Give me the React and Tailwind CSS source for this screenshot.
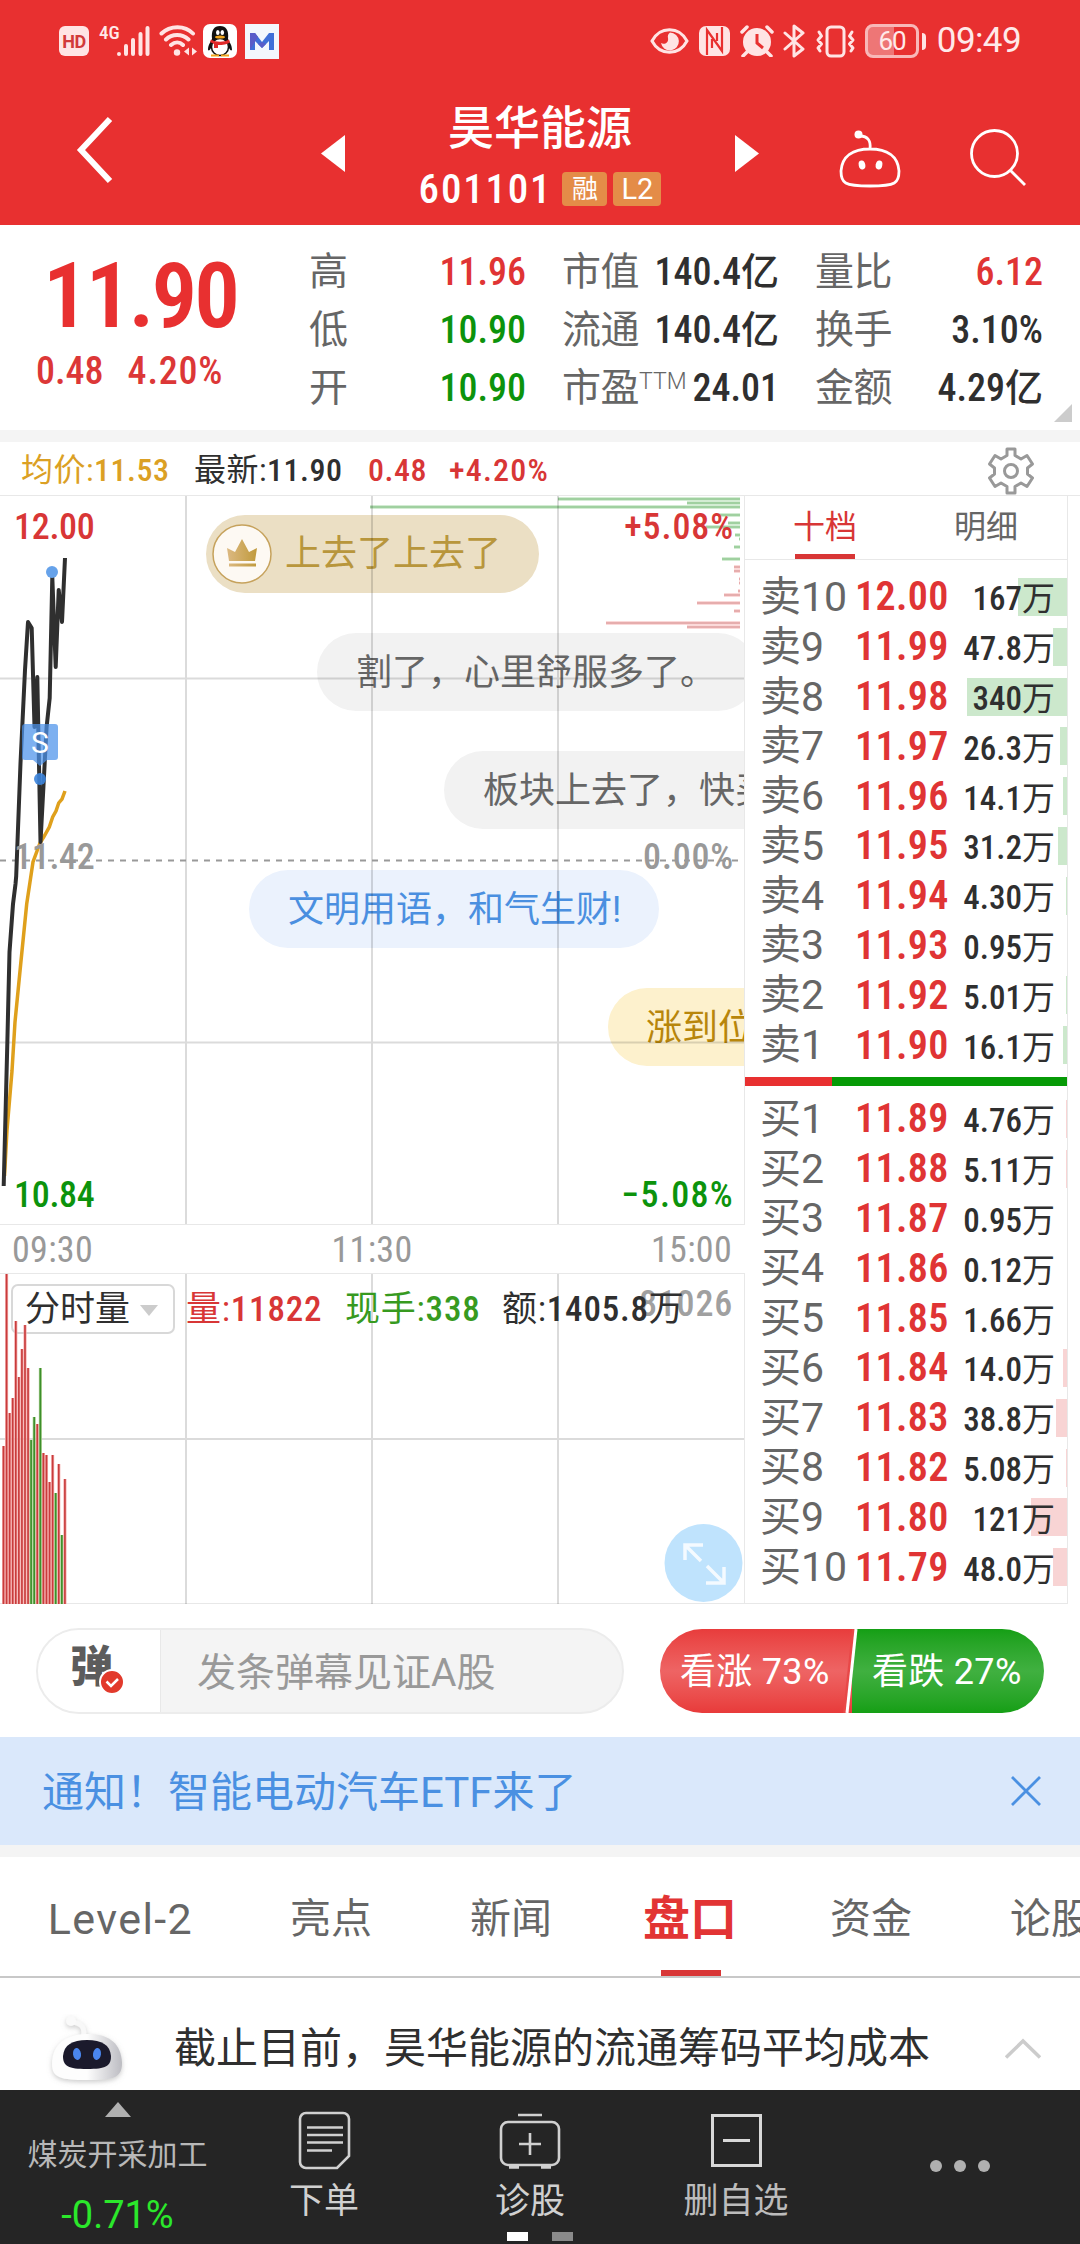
const quoteColumns = [
  {
    wrapper: 'ml-[309px] w-[217px]',
    rows: [
      { label: '高', value: '11.96', color: 'text-[#e03434]' },
      { label: '低', value: '10.90', color: 'text-[#0c930c]' },
      { label: '开', value: '10.90', color: 'text-[#0c930c]' },
    ],
  },
  {
    wrapper: 'ml-[36px] w-[217px]',
    rows: [
      { label: '市值', value: '140.4亿', color: 'text-[#2f2f2f]' },
      { label: '流通', value: '140.4亿', color: 'text-[#2f2f2f]' },
      { label: '市盈', sup: 'TTM', value: '24.01', color: 'text-[#2f2f2f]' },
    ],
  },
  {
    wrapper: 'ml-[36px] w-[228px]',
    rows: [
      { label: '量比', value: '6.12', color: 'text-[#e03434]' },
      { label: '换手', value: '3.10%', color: 'text-[#2f2f2f]' },
      { label: '金额', value: '4.29亿', color: 'text-[#2f2f2f]' },
    ],
  },
]

// bar = width of the depth bar in px
const sells = [
  { label: '卖10', price: '12.00', volume: '167万', bar: 49 },
  { label: '卖9', price: '11.99', volume: '47.8万', bar: 14 },
  { label: '卖8', price: '11.98', volume: '340万', bar: 100 },
  { label: '卖7', price: '11.97', volume: '26.3万', bar: 7 },
  { label: '卖6', price: '11.96', volume: '14.1万', bar: 4 },
  { label: '卖5', price: '11.95', volume: '31.2万', bar: 9 },
  { label: '卖4', price: '11.94', volume: '4.30万', bar: 1 },
  { label: '卖3', price: '11.93', volume: '0.95万', bar: 0 },
  { label: '卖2', price: '11.92', volume: '5.01万', bar: 1 },
  { label: '卖1', price: '11.90', volume: '16.1万', bar: 4 },
]

const buys = [
  { label: '买1', price: '11.89', volume: '4.76万', bar: 1 },
  { label: '买2', price: '11.88', volume: '5.11万', bar: 1 },
  { label: '买3', price: '11.87', volume: '0.95万', bar: 0 },
  { label: '买4', price: '11.86', volume: '0.12万', bar: 0 },
  { label: '买5', price: '11.85', volume: '1.66万', bar: 0 },
  { label: '买6', price: '11.84', volume: '14.0万', bar: 4 },
  { label: '买7', price: '11.83', volume: '38.8万', bar: 11 },
  { label: '买8', price: '11.82', volume: '5.08万', bar: 1 },
  { label: '买9', price: '11.80', volume: '121万', bar: 36 },
  { label: '买10', price: '11.79', volume: '48.0万', bar: 14 },
]

// [y, left x], all of them end at x = 740
const greenDepth = [[3, 558], [7, 687], [11, 370], [19, 718], [27, 728], [31, 706], [39, 735], [43, 739], [51, 734], [63, 722]]
const redDepth = [[71, 734], [75, 734], [83, 739], [87, 739], [95, 738], [99, 724], [107, 697], [115, 734], [127, 606], [131, 687]]

// [height, is green]
const volumes = [
  [158, 0], [330, 0], [191, 0], [206, 0], [283, 0], [227, 0], [255, 0], [279, 0], [236, 0],
  [164, 1], [187, 1], [180, 0], [236, 1], [151, 0], [149, 0], [122, 0], [149, 0], [111, 1],
  [140, 0], [69, 1], [125, 0],
]

const pricePoints = '3.7,690 7.3,548 9.5,456 13,408 15.5,388 16.2,380 20.5,267 25,174 28,126 31.7,132 34.5,231 37.3,181 40.5,346 46.6,231 49.7,202 52.3,81 55.7,171 58.7,94 62,126 65,62'
const averagePoints = '4.5,680 7,634 12,575 15,526 20.7,468 26.7,408 30,386 33,366 40,347 43.7,341 49.3,331 52.7,321 56,315 58.7,307 62,303 65,295'

function StatusBar() {
  return (
    <div className="flex h-[82px] items-center pr-[59px] pl-[59px] text-[#ffe9e9]">
      <div className="flex h-[30px] w-[30px] items-center justify-center rounded-[6px] bg-[#ffe4e4] text-[18px] font-bold tracking-[-0.5px] text-[#d23a3a]">HD</div>
      <div className="-mt-[18px] ml-[10px] w-[18px] font-['Roboto_Condensed',sans-serif] text-[19px] leading-[19px] font-medium">4G</div>
      <svg className="h-[32px] w-[33px]" viewBox="0 0 33 32" stroke="#ffe4e4" strokeWidth="4" strokeLinecap="round">
        <path d="M2 29v0M9 21v8M16 15v14M23.500 9v20M30.500 3v26" />
      </svg>
      <svg className="ml-[9px] h-[34px] w-[39px]" viewBox="0 0 39 34" fill="none" stroke="#ffe4e4" strokeWidth="4" strokeLinecap="round">
        <path d="M2.500 9.500C11 1 26 1 34 9.500M7 15.500C13 9.500 23 9.500 29.500 15.500M12 21C16 17.500 20.500 17.500 24 21" />
        <circle cx="18" cy="28.500" r="3.200" fill="#ffe4e4" stroke="none" />
        <path d="M30 23.500v8l-5-4zM33 23.500v8l5-4z" fill="#ffe4e4" stroke="none" />
      </svg>
      <svg className="ml-[5px] h-[34px] w-[34px]" viewBox="0 0 34 34">
        <rect width="34" height="34" rx="7" fill="#fff" />
        <path d="M5 26C5 20 8 18 9 15h16c1 3 4 5 4 11-1 1-2 0-3-2H8c-1 2-2 3-3 2z" fill="#111" />
        <ellipse cx="17" cy="23" rx="8.500" ry="8.500" fill="#fff" stroke="#111" strokeWidth="1.500" />
        <path d="M9 15C8 6 11 2 17 2s9 4 8 13z" fill="#111" />
        <ellipse cx="14.800" cy="8.500" rx="1.800" ry="2.500" fill="#fff" />
        <ellipse cx="19.300" cy="8.500" rx="1.800" ry="2.500" fill="#fff" />
        <ellipse cx="17" cy="13" rx="5" ry="1.600" fill="#f2a51c" />
        <path d="M8 15.500c5 3 13 3 18 0l1 3c-3 2-7 2.500-12 2.500v3h-4v-4l-4-2z" fill="#e02a2a" />
        <path d="M8 31.500h8M18 31.500h8" stroke="#f2a51c" strokeWidth="2" />
      </svg>
      <svg className="ml-[8px] h-[35px] w-[34px]" viewBox="0 0 34 35">
        <rect width="34" height="35" fill="#f3f7fd" />
        <path d="M5 9h5l7 9 7-9h5v17h-5v-9l-7 7-7-7v9H5z" fill="#3f6fd8" />
        <path d="M5 9h5l3 4-8 13zM17 18l4 2-4 4-4-4z" fill="#5a5cc8" />
      </svg>

      <svg className="ml-auto h-[28px] w-[39px]" viewBox="0 0 39 28" fill="none" stroke="#ffe4e4" strokeWidth="3">
        <path d="M2 14C10 -1 29 -1 37 14C29 29 10 29 2 14z" />
        <path d="M20 5.500a9 9 0 1 1-9 10.500c3 2 8 0 7-5c-.5-2 0-4 2-5.500z" fill="#ffe4e4" stroke="none" />
      </svg>
      <svg className="ml-[10px] h-[32px] w-[31px]" viewBox="0 0 31 32">
        <rect y="1" width="31" height="30" rx="7" fill="#ffe4e4" />
        <path d="M8 30V5l15 21V2M13 23v-9M18 8v8" fill="none" stroke="#e83030" strokeWidth="2.200" />
      </svg>
      <svg className="ml-[10px] h-[32px] w-[34px]" viewBox="0 0 34 32">
        <circle cx="17" cy="17" r="14" fill="#ffe4e4" />
        <path d="M2 7l5-5M32 7l-5-5M7 27l-4 4M27 27l4 4" stroke="#ffe4e4" strokeWidth="3.500" strokeLinecap="round" />
        <path d="M17 9v9l6 5" fill="none" stroke="#e83030" strokeWidth="3" />
      </svg>
      <svg className="ml-[9px] h-[34px] w-[23px]" viewBox="0 0 23 34" fill="none" stroke="#ffe4e4" strokeWidth="3" strokeLinejoin="round" strokeLinecap="round">
        <path d="M2 9l18 16-9 7V2l9 7L2 25" />
      </svg>
      <svg className="ml-[10px] h-[33px] w-[39px]" viewBox="0 0 39 33" fill="none" stroke="#ffe4e4" strokeWidth="3" strokeLinejoin="round" strokeLinecap="round">
        <rect x="11" y="2" width="17" height="29" rx="4" />
        <path d="M3 7l2.500 4-3.500 4 3.500 4-3.500 4 2 3M36 7l-2.500 4 3.500 4-3.500 4 3.500 4-2 3" />
      </svg>
      <div className="ml-[10px] flex h-[34px] w-[54px] items-center justify-center rounded-[8px] border-[3px] border-[#f8b8b8] bg-linear-to-r from-[#ee7676] from-55% to-[#e83030] to-55% text-[26px] leading-none tracking-[-1px]">60</div>
      <div className="ml-[3px] h-[17px] w-[4px] rounded-r bg-[#ffe4e4]" />
      <div className="ml-[9px] w-[86px] text-right font-['Roboto',sans-serif] text-[35px] leading-[34px] tracking-[-0.6px]">09:49</div>
    </div>
  )
}

function Header() {
  return (
    <div className="h-[225px] bg-[#e83030] text-white">
      <StatusBar />
      <div className="flex h-[143px]">
        <svg className="mt-[34px] ml-[74px] h-[68px] w-[40px]" viewBox="0 0 40 68" fill="none" stroke="#fff" strokeWidth="6">
          <path d="M36 3L7 34l29 31" />
        </svg>
        <svg className="mt-[53px] ml-[207px] h-[37px] w-[24px]" viewBox="0 0 24 37" fill="#fff"><path d="M24 0v37L0 18.500z" /></svg>
        <div className="ml-[65px] flex w-[260px] flex-col items-center">
          <div className="mt-[16px] text-[46px] leading-[60px] font-medium">昊华能源</div>
          <div className="mt-[10px] flex items-center">
            <span className="font-['Roboto_Condensed',sans-serif] text-[41px] leading-[42px] font-medium tracking-[1.8px]">601101</span>
            <span className="ml-[10px] h-[34px] w-[45px] rounded-[4px] bg-[#e48c48] text-center text-[26px] leading-[34px]">融</span>
            <span className="ml-[6px] h-[34px] w-[48px] rounded-[4px] bg-[#e48c48] text-center text-[29px] leading-[35px]">L2</span>
          </div>
        </div>
        <svg className="mt-[53px] ml-[65px] h-[37px] w-[24px]" viewBox="0 0 24 37" fill="#fff"><path d="M0 0v37l24-18.500z" /></svg>
        <svg className="mt-[46px] ml-[80px] h-[62px] w-[62px]" viewBox="0 0 62 62" fill="none" stroke="#fff" strokeWidth="2.800">
          <path d="M31 21c17 0 28 7 29 22c0 12-3 15-29 15S2 55 2 43C3 28 14 21 31 21zM31 21c1-8-2-13-10-13" />
          <circle cx="19.500" cy="6.500" r="4" fill="#fff" stroke="none" />
          <ellipse cx="23" cy="37" rx="3.300" ry="4.500" fill="#fff" stroke="none" transform="rotate(-12 23 37)" />
          <ellipse cx="40" cy="37" rx="3.300" ry="4.500" fill="#fff" stroke="none" transform="rotate(12 40 37)" />
        </svg>
        <svg className="mt-[45px] ml-[69px] h-[60px] w-[58px]" viewBox="0 0 58 60" fill="none" stroke="#fff" strokeWidth="2.800">
          <circle cx="24.500" cy="26.500" r="23" />
          <path d="M40 43l15 15" />
        </svg>
      </div>
    </div>
  )
}

function Quote() {
  return (
    <div className="relative flex h-[205px] pt-[18px]">
      <div className="absolute top-[20px] left-0 font-['Roboto_Condensed',sans-serif] text-[#e83030]">
        <div className="ml-[43px] text-[91px] leading-[102px] font-semibold tracking-[-3px]">11.90</div>
        <div className="mt-[4px] ml-[36px] flex gap-[24px] text-[38px] leading-[40px] font-medium text-[#dc3737]">
          <span>0.48</span>
          <span className="tracking-[0.8px]">4.20%</span>
        </div>
      </div>
      {quoteColumns.map((column) => (
        <div key={column.rows[0].label} className={column.wrapper}>
          {column.rows.map((row) => (
            <div key={row.label} className="flex h-[58px] items-center justify-between">
              <div className="flex text-[39px] leading-[58px] tracking-[-0.5px] text-[#666]">
                {row.label}
                {row.sup && <span className="-mt-[6px] text-[23px] font-light tracking-normal">{row.sup}</span>}
              </div>
              <div className={`font-['Roboto_Condensed','Noto_Sans_CJK_SC',sans-serif] text-[38px] leading-[58px] font-medium ${row.color}`}>{row.value}</div>
            </div>
          ))}
        </div>
      ))}
      <svg className="absolute right-[8px] bottom-[8px] h-[18px] w-[18px]" viewBox="0 0 18 18" fill="#ccc"><path d="M18 0v18H0z" /></svg>
    </div>
  )
}

function InfoRow() {
  return (
    <div className="flex h-[54px] items-center border-b border-[#e8e8e8] pt-[4px] pr-[45px] pl-[21px] font-['Roboto_Condensed','Noto_Sans_CJK_SC',sans-serif] text-[32px] leading-[49px] font-medium tracking-[0.5px]">
      <div className="w-[173px] text-[#dba024]"><span className="font-normal">均价:</span>11.53</div>
      <div className="w-[174px] text-[#2f2f2f]"><span className="font-normal">最新:</span>11.90</div>
      <div className="w-[81px] text-[#d83636]">0.48</div>
      <div className="tracking-[1.2px] text-[#d83636]">+4.20%</div>
      <svg className="ml-auto h-[48px] w-[48px]" viewBox="0 0 48 48" fill="none" stroke="#999" strokeWidth="3" strokeLinejoin="round">
        <path d="M20 2h8v6.500l6 3.500 6-3.500 5.500 8.500-5 4v6l5 4-5.500 8.500-6-3.500-6 3.500V46h-8v-6.500L14 36l-6 3.500L2.500 31l5-4v-6l-5-4L8 8.500l6 3.500 6-3.500z" />
        <circle cx="24" cy="24" r="6.500" />
      </svg>
    </div>
  )
}

function Barrage() {
  return (
    <div className="absolute inset-0 overflow-hidden text-[36px] leading-[80px] whitespace-nowrap">
      <div className="absolute top-[19px] left-[206px] flex h-[78px] w-[333px] items-center rounded-full bg-[#ebdfc4] text-[#b8963c]">
        <svg className="mr-[13px] ml-[6px] h-[60px] w-[60px]" viewBox="0 0 60 60">
          <defs>
            <linearGradient id="crown" x2="1">
              <stop offset="0" stopColor="#dcb982" />
              <stop offset="1" stopColor="#c09a3c" />
            </linearGradient>
          </defs>
          <circle cx="30" cy="30" r="29" fill="#fdf9f3" stroke="#c6a25c" strokeWidth="1.500" />
          <path d="M15 24l8 4 7-13 7 13 8-4-2 13H17zM17 39.500h27v3H17z" fill="url(#crown)" />
        </svg>
        上去了上去了
      </div>
      <div className="absolute top-[137px] left-[317px] h-[78px] w-[440px] rounded-full bg-[#f2f2f2] pl-[39px] text-[#666]">割了，心里舒服多了。</div>
      <div className="absolute top-[255px] left-[444px] h-[78px] w-[420px] rounded-full bg-[#f2f2f2] pl-[39px] text-[#666]">板块上去了，快买</div>
      <div className="absolute top-[374px] left-[249px] h-[78px] w-[410px] rounded-full bg-[#ebf2fd] pl-[39px] text-[#4a8fe0]">文明用语，和气生财!</div>
      <div className="absolute top-[492px] left-[608px] h-[78px] w-[260px] rounded-full bg-[#fdf1cd] pl-[38px] text-[#b8860b]">涨到位了</div>
    </div>
  )
}

function PriceChart() {
  return (
    <div className="relative h-[729px] border-r border-b border-[#e8e8e8]">
      <Barrage />
      <svg className="absolute inset-0" width="744" height="728" viewBox="0 0 744 728" fill="none">
        {greenDepth.map(([y, x]) => (
          <g key={y}>
            <path d={`M${x} ${y}H740`} stroke="#d3ecd3" strokeWidth="4" />
            <path d={`M${x} ${y}H740`} stroke="#a0d0a0" strokeWidth="2" />
          </g>
        ))}
        {redDepth.map(([y, x]) => (
          <g key={y}>
            <path d={`M${x} ${y}H740`} stroke="#fbd9d9" strokeWidth="4" />
            <path d={`M${x} ${y}H740`} stroke="#e6adad" strokeWidth="2" />
          </g>
        ))}
        <path d="M0 182.500H744M0 546.500H744M186 0V728M372 0V728M558 0V728" stroke="#000" strokeOpacity="0.140" strokeWidth="2" />
        <path d="M0 364.500H740" stroke="#999" strokeWidth="2" strokeDasharray="6 6" />
        <polyline points={averagePoints} stroke="#dfa01c" strokeWidth="3.500" />
        <polyline points={pricePoints} stroke="#2f2f2f" strokeWidth="4" strokeLinejoin="round" />
        <path d="M25 228h30a3 3 0 0 1 3 3v30a3 3 0 0 1-3 3h-8l-7 6-7-6h-8a3 3 0 0 1-3-3v-30a3 3 0 0 1 3-3z" fill="#4b92ea" fillOpacity="0.720" />
        <circle cx="40" cy="283" r="6" fill="#3c84dc" fillOpacity="0.900" />
        <circle cx="52" cy="76" r="6" fill="#66a2ea" />
      </svg>
      <div className="absolute top-[230px] left-[22px] w-[36px] text-center text-[30px] leading-[33px] text-white">S</div>
      <div className="absolute inset-0 font-['Roboto_Condensed',sans-serif] text-[36px] leading-[36px] font-medium">
        <span className="absolute top-[13px] left-[14px] tracking-[-0.3px] text-[#d83636]">12.00</span>
        <span className="absolute top-[13px] right-[10px] tracking-[0.9px] text-[#d83636]">+5.08%</span>
        <span className="absolute top-[343px] left-[14px] tracking-[-0.3px] text-[#999]">11.42</span>
        <span className="absolute top-[343px] right-[10px] tracking-[0.8px] text-[#999]">0.00%</span>
        <span className="absolute top-[681px] left-[14px] tracking-[-0.3px] text-[#0c930c]">10.84</span>
        <span className="absolute top-[681px] right-[10px] tracking-[1.3px] text-[#0c930c]">−5.08%</span>
      </div>
    </div>
  )
}

function VolumeChart() {
  return (
    <div className="relative h-[331px] border-t border-r border-b border-[#e8e8e8]">
      <svg className="absolute inset-0" width="744" height="330" viewBox="0 0 744 330" fill="none">
        <path d="M0 165H744M186 0V330M372 0V330M558 0V330" stroke="#000" strokeOpacity="0.140" strokeWidth="2" />
      </svg>
      <div className="absolute top-[10px] left-[11px] flex h-[50px] w-[164px] items-center rounded-[7px] border-2 border-[#d8d8d8] bg-white pt-[2px] pl-[12px] text-[35px] leading-[44px] text-[#2f2f2f]">
        分时量
        <svg className="ml-[10px] h-[11px] w-[18px]" viewBox="0 0 18 11" fill="#ccc"><path d="M0 0h18l-9 11z" /></svg>
      </div>
      <svg className="absolute inset-0" width="744" height="330" viewBox="0 0 744 330">
        {volumes.map(([h, green], i) => (
          <g key={i}>
            <rect x={2 + i * 3.07} y={330 - h} width="3.070" height={h} fill={green ? '#a9cf8f' : '#f4a9a9'} />
            <rect x={2.7 + i * 3.07} y={330 - h} width="1.600" height={h} fill={green ? '#3c8f2c' : '#c83c3c'} />
          </g>
        ))}
      </svg>
      <span className="absolute top-[12px] right-[11px] font-['Roboto_Condensed',sans-serif] text-[36px] leading-[36px] font-medium tracking-[0.8px] text-[#a0a0a0]">81026</span>
      <div className="absolute top-[14px] left-[186px] flex font-['Roboto_Condensed','Noto_Sans_CJK_SC',sans-serif] text-[35px] leading-[44px] font-medium tracking-[0.8px] whitespace-nowrap">
        <span className="w-[159px] text-[#d83636]"><span className="font-normal">量:</span>11822</span>
        <span className="w-[157px] text-[#379a1f]"><span className="font-normal">现手:</span>338</span>
        <span className="text-[#2f2f2f]"><span className="font-normal">额:</span>1405.8<span className="font-normal">万</span></span>
      </div>
      <svg className="absolute right-[1px] bottom-[1px] h-[78px] w-[79px]" viewBox="0 0 79 78" fill="none" stroke="#f4faff" strokeWidth="3.500">
        <circle cx="39.500" cy="39" r="39" fill="#bfe3fd" stroke="none" />
        <path d="M37 37L22 22M21 36V21h18M43 42l16 16M60 43v16H42" />
      </svg>
    </div>
  )
}

function BookRow({ row, barColor }) {
  return (
    <div className="relative flex h-[49.8px] items-center pl-[15px]">
      <div className={`absolute top-[6px] right-0 h-[38px] ${barColor}`} style={{ width: row.bar }} />
      <span className="relative mt-px w-[95px] text-[41px] leading-[49px] whitespace-nowrap text-[#666]">{row.label}</span>
      <span className="relative font-['Roboto_Condensed',sans-serif] text-[40px] leading-[49px] font-semibold tracking-[0.4px] text-[#e03434]">{row.price}</span>
      <span className="relative mt-[4px] mr-[12px] ml-auto font-['Roboto_Condensed','Noto_Sans_CJK_SC',sans-serif] text-[33px] leading-[45px] font-medium text-[#2f2f2f]">
        {row.volume.slice(0, -1)}<span className="font-normal">万</span>
      </span>
    </div>
  )
}

function OrderBook() {
  return (
    <div className="flex h-[1108px] w-[323px] flex-col border-r border-b border-[#e8e8e8]">
      <div className="flex h-[64px] border-b border-[#e8e8e8] text-center text-[32px] leading-[62px]">
        <div className="relative w-[160px] text-[#d83636]">
          十档
          <div className="absolute bottom-0 left-[50px] h-[5px] w-[60px] bg-[#d83636]" />
        </div>
        <div className="w-[162px] text-[#666]">明细</div>
      </div>
      <div className="mt-[12px]">
        {sells.map((row) => <BookRow key={row.label} row={row} barColor="bg-[#cce8cc]" />)}
      </div>
      <div className="mt-[7px] mb-[8px] flex h-[9px] shrink-0 bg-[#069a06]">
        <div className="w-[87px] bg-[#e83030]" />
      </div>
      <div>
        {buys.map((row) => <BookRow key={row.label} row={row} barColor="bg-[#f8d4d4]" />)}
      </div>
    </div>
  )
}

function BarrageInput() {
  return (
    <div className="flex h-[133px] items-center pl-[36px]">
      <div className="flex h-[86px] w-[588px] overflow-hidden rounded-full border-2 border-[#ececec] bg-[#f4f4f4]">
        <div className="relative w-[123px] border-r border-[#e8e8e8] bg-white">
          <div className="absolute top-[11px] left-[32px] text-[43px] leading-[52px] font-black text-[#5c5c5c]">弹</div>
          <svg className="absolute top-[39px] left-[61px] h-[26px] w-[26px]" viewBox="0 0 26 26" fill="none">
            <circle cx="13" cy="13" r="12" fill="#e23a2c" stroke="#fff" strokeWidth="2" />
            <path d="M7.500 12.500l4.500 4.500 7-7" stroke="#fff" strokeWidth="2.500" />
          </svg>
        </div>
        <div className="pl-[36px] text-[39px] leading-[86px] text-[#999]">发条弹幕见证A股</div>
      </div>
      <div className="relative ml-[36px] flex h-[84px] w-[384px] overflow-hidden rounded-full text-[36px] leading-[86px] tracking-[0.3px] text-white">
        <div className="w-[192px] bg-linear-to-b from-[#e83c3c] via-[#ee6464] to-[#e83a3a] pl-[20px]">看涨 73%</div>
        <div className="flex-1 bg-linear-to-b from-[#149f14] via-[#40b040] to-[#149f14] pl-[20px]">看跌 27%</div>
        <svg className="absolute top-0 left-[183px] h-[84px] w-[20px]" viewBox="0 0 20 84" fill="none">
          <path d="M4 84L13 0H9L0 84z" fill="#e84848" />
          <path d="M13 0L4 84" stroke="#fff" strokeWidth="3" />
        </svg>
      </div>
    </div>
  )
}

function Notice() {
  return (
    <div className="flex h-[108px] items-center justify-between bg-[#dae8fb] pr-[38px] pl-[42px] text-[42px] leading-[108px] text-[#4a90e2]">
      <div className="pt-[3px]">通知！智能电动汽车ETF来了</div>
      <svg className="h-[32px] w-[32px]" viewBox="0 0 32 32" stroke="#4a90e2" strokeWidth="2.800">
        <path d="M2 2l28 28M30 2L2 30" />
      </svg>
    </div>
  )
}

function Tabs() {
  return (
    <div className="flex h-[121px] overflow-hidden border-b-2 border-[#c8c8c8] text-center text-[41px] leading-[124px] whitespace-nowrap text-[#666]">
      <div className="w-[241px] shrink-0 text-[43px] tracking-[1.4px]">Level-2</div>
      <div className="w-[180px] shrink-0">亮点</div>
      <div className="w-[180px] shrink-0">新闻</div>
      <div className="relative w-[178px] shrink-0 text-[47px] font-bold text-[#e23434]">
        盘口
        <div className="absolute top-[113px] left-[60px] h-[6px] w-[60px] bg-[#d83636]" />
      </div>
      <div className="ml-[2px] w-[180px] shrink-0">资金</div>
      <div className="w-[180px] shrink-0">论股</div>
    </div>
  )
}

function Advice() {
  return (
    <div className="flex h-[112px] pl-[46px]">
      <svg className="mt-[36px] h-[76px] w-[84px]" viewBox="0 0 84 76">
        <defs>
          <linearGradient id="head" x2="1">
            <stop offset="0.500" stopColor="#fdfdfd" />
            <stop offset="1" stopColor="#bcbcc2" />
          </linearGradient>
          <filter id="soft" x="-20%" y="-20%" width="140%" height="150%">
            <feDropShadow dx="0" dy="2" stdDeviation="2.500" floodColor="#999" floodOpacity="0.500" />
          </filter>
        </defs>
        <g filter="url(#soft)">
          <path d="M37 24c3-11-2-15-11-16" fill="none" stroke="#f8f8f8" strokeWidth="5" strokeLinecap="round" />
          <circle cx="25" cy="7" r="5" fill="#fafafa" />
          <path d="M42 20c22 0 33 10 34 29c0 15-9 17-35 17S6 64 6 50C6 30 20 20 42 20z" fill="url(#head)" />
        </g>
        <path d="M41 26c15 0 23 5 24 16c0 10-5 13-24 13S17 52 17 42C18 31 26 26 41 26z" fill="#1b1a2c" />
        <ellipse cx="31" cy="40" rx="4" ry="6" fill="#4a86ee" transform="rotate(-8 31 40)" />
        <ellipse cx="51" cy="40" rx="4" ry="6" fill="#4a86ee" transform="rotate(8 51 40)" />
      </svg>
      <div className="ml-[44px] text-[42px] leading-[142px] whitespace-nowrap text-[#2f2f2f]">截止目前，昊华能源的流通筹码平均成本</div>
      <svg className="mt-[60px] ml-[75px] h-[21px] w-[36px]" viewBox="0 0 36 21" fill="none" stroke="#ccc" strokeWidth="3.500">
        <path d="M1 19.500L18 3l17 16.500" />
      </svg>
    </div>
  )
}

function BottomBar() {
  return (
    <div className="relative flex h-[154px] bg-[#252525] text-center text-[35px] leading-[44px] text-[#d0d0d0]">
      <div className="flex w-[235px] flex-col items-center">
        <svg className="mt-[12px] h-[15px] w-[26px]" viewBox="0 0 26 15" fill="#b0b0b0"><path d="M13 0l13 15H0z" /></svg>
        <div className="mt-[16px] text-[30px] leading-[44px] text-[#b8b8b8]">煤炭开采加工</div>
        <div className="mt-[16px] text-[38px] leading-[44px] text-[#2be82b]">-0.71%</div>
      </div>
      <div className="flex w-[178px] flex-col items-center">
        <svg className="mt-[21px] h-[59px] w-[53px]" viewBox="0 0 53 59" fill="none" stroke="#d0d0d0" strokeWidth="2.600">
          <path d="M8 2h37a6 6 0 0 1 6 6v37L39 57H8a6 6 0 0 1-6-6V8a6 6 0 0 1 6-6zM9 16.500h36M9 24h36M9 31.500h36M9 39.500h25" />
        </svg>
        <div className="mt-[10px]">下单</div>
      </div>
      <div className="flex w-[234px] flex-col items-center">
        <svg className="mt-[21px] h-[59px] w-[62px]" viewBox="0 0 62 59" fill="none" stroke="#d0d0d0" strokeWidth="2.600">
          <path d="M19 4h24M9 11h44a7 7 0 0 1 7 7v29a7 7 0 0 1-7 7H9a7 7 0 0 1-7-7V18a7 7 0 0 1 7-7zM31 22v22M20 33h22M10 56.500h10M42 56.500h10" />
        </svg>
        <div className="mt-[10px]">诊股</div>
      </div>
      <div className="flex w-[178px] flex-col items-center">
        <svg className="mt-[24px] h-[53px] w-[51px]" viewBox="0 0 51 53" fill="none" stroke="#d8d8d8" strokeWidth="3">
          <path d="M1.500 1.500h48v50h-48zM12 26.500h27" />
        </svg>
        <div className="mt-[13px] text-[#bcbcbc]">删自选</div>
      </div>
      <div className="flex flex-1 gap-[12px] pt-[70px] pl-[105px]">
        <div className="h-[12px] w-[12px] rounded-full bg-[#b0b0b0]" />
        <div className="h-[12px] w-[12px] rounded-full bg-[#b0b0b0]" />
        <div className="h-[12px] w-[12px] rounded-full bg-[#b0b0b0]" />
      </div>
      <div className="absolute bottom-[3px] left-[507px] flex gap-[24px]">
        <div className="h-[9px] w-[21px] bg-white" />
        <div className="h-[9px] w-[21px] bg-[#8a8a8a]" />
      </div>
    </div>
  )
}

export default function App() {
  return (
    <div className="flex h-[2244px] w-[1080px] flex-col overflow-hidden bg-white font-['Roboto','Noto_Sans_CJK_SC',sans-serif]">
      <Header />
      <Quote />
      <div className="h-[12px] bg-[#f4f4f4]" />
      <InfoRow />
      <div className="flex h-[1108px]">
        <div className="w-[745px]">
          <PriceChart />
          <div className="flex h-[48px] items-center justify-between pt-[2px] pr-[13px] pl-[12px] font-['Roboto_Condensed',sans-serif] text-[36px] leading-[46px] font-[450] tracking-[0.3px] text-[#999]">
            <span>09:30</span>
            <span>11:30</span>
            <span>15:00</span>
          </div>
          <VolumeChart />
        </div>
        <OrderBook />
      </div>
      <BarrageInput />
      <Notice />
      <div className="h-[12px] shrink-0 bg-[#f4f4f4]" />
      <Tabs />
      <Advice />
      <BottomBar />
    </div>
  )
}
